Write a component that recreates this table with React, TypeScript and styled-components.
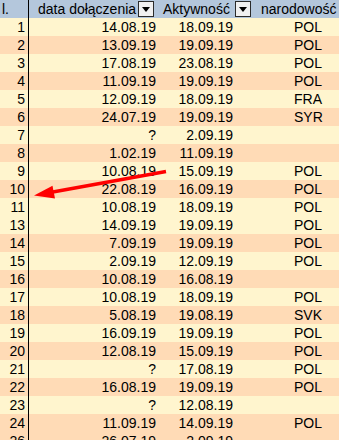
import React from "react";
import styled, { createGlobalStyle } from "styled-components";

const Global = createGlobalStyle`
  html, body { margin: 0; padding: 0; background: #ffffff; overflow: hidden; }
  body { font-family: "Liberation Sans", Arial, sans-serif; }
`;

const Sheet = styled.div`
  position: relative;
  width: 339px;
  height: 440px;
  overflow: hidden;
  font-family: "Liberation Sans", Arial, sans-serif;
  font-size: 14px;
  line-height: 18px;
  color: #000;
`;

const Row = styled.div<{ $bg: string }>`
  display: grid;
  grid-template-columns: 28px 1px 129px 96px 100px;
  height: 18px;
  background: ${(p) => p.$bg};
  white-space: nowrap;
`;

const Divider = styled.div`
  background: #000;
`;

const NumCell = styled.div`
  text-align: right;
  padding-right: 3px;
`;

const HeadFirst = styled.div`
  text-align: left;
  padding-left: 2px;
`;

const DateCell = styled.div<{ $pr: number }>`
  text-align: right;
  padding-right: ${(p) => p.$pr}px;
`;

const NatCell = styled.div`
  padding-left: 40px;
`;

const HeadCell = styled.div<{ $pl: number; $mr: number }>`
  display: flex;
  align-items: center;
  justify-content: space-between;
  padding-left: ${(p) => p.$pl}px;
  padding-right: ${(p) => p.$mr}px;
  overflow: hidden;
`;

const HeadText = styled.span`
  display: block;
`;

const FilterButton = styled.span`
  box-sizing: border-box;
  width: 16px;
  height: 16px;
  background: #f0f0f0;
  border: 1px solid #2b2b2b;
  display: flex;
  align-items: center;
  justify-content: center;
  flex: none;
  &::after {
    content: "";
    width: 0;
    height: 0;
    border-left: 4px solid transparent;
    border-right: 4px solid transparent;
    border-top: 5px solid #000;
  }
`;

const PlainHead = styled.div`
  padding-left: 7px;
`;

const Arrow = styled.svg`
  position: absolute;
  left: 0;
  top: 0;
  pointer-events: none;
`;

const YELLOW = "#fff5ce";
const PEACH = "#ffdbb6";
const HEAD = "#b4c7dc";

type Rec = [number, string, string, string];

const data: Rec[] = [
  [1, "14.08.19", "18.09.19", "POL"],
  [2, "13.09.19", "19.09.19", "POL"],
  [3, "17.08.19", "23.08.19", "POL"],
  [4, "11.09.19", "19.09.19", "POL"],
  [5, "12.09.19", "18.09.19", "FRA"],
  [6, "24.07.19", "19.09.19", "SYR"],
  [7, "?", "2.09.19", ""],
  [8, "1.02.19", "11.09.19", ""],
  [9, "10.08.19", "15.09.19", "POL"],
  [10, "22.08.19", "16.09.19", "POL"],
  [11, "10.08.19", "18.09.19", "POL"],
  [13, "14.09.19", "19.09.19", "POL"],
  [14, "7.09.19", "19.09.19", "POL"],
  [15, "2.09.19", "12.09.19", "POL"],
  [16, "10.08.19", "16.08.19", ""],
  [17, "10.08.19", "18.09.19", "POL"],
  [18, "5.08.19", "19.08.19", "SVK"],
  [19, "16.09.19", "19.09.19", "POL"],
  [20, "12.08.19", "15.09.19", "POL"],
  [21, "?", "17.08.19", "POL"],
  [22, "16.08.19", "19.09.19", "POL"],
  [23, "?", "12.08.19", ""],
  [24, "11.09.19", "14.09.19", "POL"],
  [26, "26.07.19", "2.09.19", ""],
];

export default function App() {
  return (
    <>
      <Global />
      <Sheet>
        <Row $bg={HEAD}>
          <HeadFirst>l.</HeadFirst>
          <Divider />
          <HeadCell $pl={9} $mr={4}>
            <HeadText>data dołączenia</HeadText>
            <FilterButton />
          </HeadCell>
          <HeadCell $pl={5} $mr={3}>
            <HeadText>Aktywność</HeadText>
            <FilterButton />
          </HeadCell>
          <PlainHead>narodowość</PlainHead>
        </Row>
        {data.map(([n, joined, active, nat]) => (
          <Row key={n} $bg={n % 2 === 1 ? YELLOW : PEACH}>
            <NumCell>{n}</NumCell>
            <Divider />
            <DateCell $pr={2}>{joined}</DateCell>
            <DateCell $pr={21}>{active}</DateCell>
            <NatCell>{nat}</NatCell>
          </Row>
        ))}
        <Arrow width="339" height="440" viewBox="0 0 339 440">
          <line x1="166" y1="171.5" x2="50" y2="192.5" stroke="#ff0000" strokeWidth="3.5" />
          <polygon points="34,195.5 52.5,185.8 55,198.5" fill="#ff0000" />
        </Arrow>
      </Sheet>
    </>
  );
}
